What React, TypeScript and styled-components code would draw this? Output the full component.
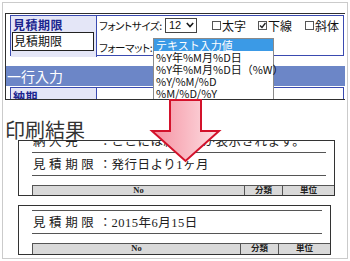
import styled, { createGlobalStyle } from "styled-components"

const GlobalStyle = createGlobalStyle`
  html, body {
    margin: 0;
    padding: 0;
    background: #fff;
  }
  body {
    width: 350px;
    height: 261px;
    overflow: hidden;
    font-family: "Noto Sans CJK JP", "Noto Sans", sans-serif;
  }
`

const Frame = styled.div`
  position: relative;
  box-sizing: border-box;
  width: 346px;
  height: 257px;
  margin: 2px 0 0 2px;
  border: 1px solid #cbcbcb;
  overflow: hidden;
  background: #fff;
`

/* 上の画面キャプチャ部分 */
const Panel = styled.div`
  position: relative;
  box-sizing: border-box;
  width: 340px;
  height: 87px;
  margin: 10px 0 0 2px;
  border: 1px solid #2f2f2f;
  border-right: none;
  overflow: hidden;
  font-size: 12px;
  color: #111;
`
const FieldRow = styled.div<{ $height: number }>`
  display: grid;
  grid-template-columns: 86px 1fr;
  box-sizing: border-box;
  height: ${(p) => p.$height}px;
  margin: 1px 1px 0 4px;
  border: 1px solid #3a4ab0;
`
const LabelCell = styled.div`
  box-sizing: border-box;
  background: #e4e6f7;
  border-right: 1px solid #3a4ab0;
  padding: 2px 0 0 1px;
`
const FieldLabel = styled.div`
  padding-left: 1px;
  font-size: 12px;
  line-height: 14px;
  font-weight: 700;
  letter-spacing: 0.5px;
  color: #1c2690;
`
const TextBox = styled.div`
  box-sizing: border-box;
  width: 82px;
  height: 19px;
  border: 1px solid #222;
  background: #fff;
  padding-left: 1px;
  font-size: 12px;
  line-height: 16px;
`
const ValueCell = styled.div`
  display: flex;
  flex-direction: column;
  min-width: 0;
  padding-left: 2px;
`
const OptionLine = styled.div<{ $gap?: number }>`
  display: flex;
  align-items: center;
  height: ${(p) => (p.$gap ? 19 : 18)}px;
  margin-top: ${(p) => p.$gap ?? 0}px;
  white-space: nowrap;
  & > * {
    flex-shrink: 0;
  }
`
const Caption = styled.span<{ $width: number }>`
  width: ${(p) => p.$width}px;
  font-size: 10.5px;
  font-feature-settings: "palt";
  letter-spacing: -0.4px;
`
const SizeSelect = styled.div`
  box-sizing: border-box;
  display: flex;
  align-items: center;
  justify-content: space-between;
  width: 32px;
  height: 15px;
  padding: 0 2px 0 3px;
  border: 1px solid #444;
  font-family: "Liberation Sans", Arial, sans-serif;
  font-size: 11px;
`
const Checks = styled.div`
  display: flex;
  margin-left: 15px;
`
const CheckItem = styled.label<{ $width: number }>`
  display: flex;
  align-items: center;
  flex-shrink: 0;
  gap: 1px;
  width: ${(p) => p.$width}px;
  font-size: 12px;
`
const CheckBox = styled.span`
  position: relative;
  flex-shrink: 0;
  box-sizing: border-box;
  width: 9px;
  height: 9px;
  border: 1px solid #555;
  background: #fff;
  svg {
    position: absolute;
    left: 0;
    top: 0;
  }
`
const FormatAnchor = styled.div`
  position: relative;
  align-self: flex-start;
  width: 1px;
  height: 19px;
`
const Listbox = styled.div`
  position: absolute;
  top: 0;
  left: 0;
  z-index: 2;
  box-sizing: border-box;
  width: 121px;
  border: 1px solid #8a8a8a;
  background: #fff;
`
const ListOption = styled.div<{ $active?: boolean }>`
  height: 12px;
  padding-left: 2px;
  font-size: 11px;
  line-height: 12px;
  white-space: nowrap;
  background: ${(p) => (p.$active ? "#3b9ae6" : "#fff")};
  color: ${(p) => (p.$active ? "#fff" : "#111")};
`
const SectionBar = styled.div`
  margin-top: 10px;
  height: 20px;
  padding-left: 1px;
  background: #6c86c7;
  color: #fff;
  font-size: 14px;
  line-height: 20px;
`

/* 印刷結果 */
const ResultTitle = styled.h2`
  margin: 20px 0 0 2px;
  font-size: 20px;
  line-height: 20px;
  font-weight: 400;
  color: #333;
`
const Doc = styled.div<{ $width: number; $height?: number }>`
  box-sizing: border-box;
  width: ${(p) => p.$width}px;
  height: ${(p) => (p.$height ? `${p.$height}px` : "auto")};
  margin-left: 15px;
  border: 1px solid #333;
  overflow: hidden;
  background: #fff;
  font-family: "Liberation Serif", "Noto Sans CJK JP", serif;
  color: #222;
  & + & {
    margin-top: 9px;
  }
`
const Sheet = styled.div<{ $offset: number }>`
  margin-top: -${(p) => p.$offset}px;
`
const DocLine = styled.div`
  display: flex;
  align-items: flex-end;
  box-sizing: border-box;
  height: 23px;
  margin: 0 8px 0 13px;
  padding-bottom: 3px;
  border-bottom: 1px solid #555;
  font-size: 12.5px;
  line-height: 14px;
  white-space: nowrap;
`
const DocKey = styled.span`
  width: 66px;
  padding-left: 1px;
  letter-spacing: 3.6px;
`
const DocValue = styled.span`
  letter-spacing: 0.5px;
`
const HeadRow = styled.div`
  display: grid;
  grid-template-columns: 1fr 38px 52px;
  box-sizing: border-box;
  height: 11px;
  margin: 9px 0 0 13px;
  border-top: 1px solid #555;
  border-left: 1px solid #555;
  background: #d9d9d9;
  font-size: 8.5px;
  line-height: 9px;
  font-weight: 700;
  text-align: center;
`
const HeadCell = styled.span`
  & + & {
    border-left: 1px solid #555;
  }
`
const ArrowMark = styled.svg`
  position: absolute;
  left: 145px;
  top: 95px;
  z-index: 3;
  overflow: visible;
`

const formats = ["テキスト入力値", "%Y年%M月%D日", "%Y年%M月%D日（%W）", "%Y/%M/%D", "%M/%D/%Y"]

function Check({ label, checked, width }: { label: string; checked?: boolean; width: number }) {
  return (
    <CheckItem $width={width}>
      <CheckBox>
        {checked && (
          <svg width="7" height="7" viewBox="0 0 7 7">
            <polyline points="1,3.5 3,5.5 6.5,1" fill="none" stroke="#222" strokeWidth="1.4" />
          </svg>
        )}
      </CheckBox>
      {label}
    </CheckItem>
  )
}

function PrintDoc({ width, height, offset, top, bottom }: {
  width: number
  height?: number
  offset: number
  top: [string, string]
  bottom: [string, string]
}) {
  return (
    <Doc $width={width} $height={height}>
      <Sheet $offset={offset}>
        <DocLine>
          <DocKey>{top[0]}</DocKey>：<DocValue>{top[1]}</DocValue>
        </DocLine>
        <DocLine>
          <DocKey>{bottom[0]}</DocKey>：<DocValue>{bottom[1]}</DocValue>
        </DocLine>
        <HeadRow>
          <HeadCell>No</HeadCell>
          <HeadCell>分類</HeadCell>
          <HeadCell>単位</HeadCell>
        </HeadRow>
      </Sheet>
    </Doc>
  )
}

export default function App() {
  return (
    <>
      <GlobalStyle />
      <Frame>
        <Panel>
          <FieldRow $height={41}>
            <LabelCell>
              <FieldLabel>見積期限</FieldLabel>
              <TextBox>見積期限</TextBox>
            </LabelCell>
            <ValueCell>
              <OptionLine>
                <Caption $width={66}>フォントサイズ:</Caption>
                <SizeSelect>
                  12
                  <svg width="8" height="6" viewBox="0 0 8 6">
                    <polyline points="0.8,1 4,4.5 7.2,1" fill="none" stroke="#1a1a1a" strokeWidth="1.6" />
                  </svg>
                </SizeSelect>
                <Checks>
                  <Check label="太字" width={46} />
                  <Check label="下線" checked width={47} />
                  <Check label="斜体" width={38} />
                </Checks>
              </OptionLine>
              <OptionLine $gap={4}>
                <Caption $width={54}>フォーマット:</Caption>
                <FormatAnchor>
                  <Listbox>
                    {formats.map((f, i) => (
                      <ListOption key={f} $active={i === 0}>{f}</ListOption>
                    ))}
                  </Listbox>
                </FormatAnchor>
              </OptionLine>
            </ValueCell>
          </FieldRow>
          <SectionBar>一行入力</SectionBar>
          <FieldRow $height={24}>
            <LabelCell>
              <FieldLabel>納期</FieldLabel>
            </LabelCell>
            <ValueCell />
          </FieldRow>
        </Panel>

        <ResultTitle>印刷結果</ResultTitle>
        <PrintDoc
          width={317}
          height={56}
          offset={11}
          top={["納入先", "ここには納入先が表示されます。"]}
          bottom={["見積期限", "発行日より1ヶ月"]}
        />
        <PrintDoc
          width={313}
          offset={18}
          top={["納入先", "ここには納入先が表示されます。"]}
          bottom={["見積期限", "2015年6月15日"]}
        />

        <ArrowMark width="76" height="66" viewBox="0 0 76 66">
          <defs>
            <linearGradient id="arrowFill" x1="0" y1="0" x2="1" y2="0">
              <stop offset="0" stopColor="#f590a0" />
              <stop offset="1" stopColor="#fde0e4" />
            </linearGradient>
          </defs>
          <polygon
            points="22,2 53,2 53,33 71,33 37.5,63 4,33 22,33"
            fill="url(#arrowFill)"
            stroke="#d3122b"
            strokeWidth="2"
            strokeLinejoin="miter"
          />
        </ArrowMark>
      </Frame>
    </>
  )
}
